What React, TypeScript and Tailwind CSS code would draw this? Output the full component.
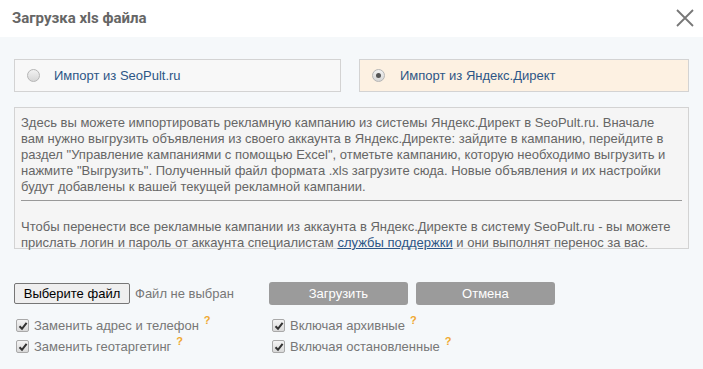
import React from "react";

function Radio({ on }: { on?: boolean }) {
  return (
    <span className="flex h-[13px] w-[13px] items-center justify-center rounded-full border border-[#b5b5b5] bg-gradient-to-b from-[#f2f2f2] to-[#d6d6d6]">
      {on && <span className="h-[5px] w-[5px] rounded-full bg-[#555]" />}
    </span>
  );
}

function Check() {
  return (
    <span className="flex h-[13px] w-[13px] shrink-0 items-center justify-center rounded-[2px] border border-[#a9a9a9] bg-gradient-to-b from-[#f4f4f4] to-[#d9d9d9]">
      <svg width="10" height="10" viewBox="0 0 10 10">
        <path d="M1.5 5.2 L4 7.8 L8.6 1.8" stroke="#333" strokeWidth="2" fill="none" />
      </svg>
    </span>
  );
}

function Option({ label }: { label: string }) {
  return (
    <label className="flex items-center gap-[5px] text-[13px] leading-[21px] text-[#777]">
      <Check />
      <span>{label}</span>
      <span className="-mt-[11px] text-[11px] font-bold text-[#f0a830]">?</span>
    </label>
  );
}

export default function App() {
  return (
    <div className="h-[369px] w-[703px] overflow-hidden bg-[#f5f8fa] font-['Liberation_Sans',Arial,sans-serif]">
      <div className="flex h-[37px] items-center justify-between bg-white pl-[12px] pr-[8px]">
        <h1 className="font-['Roboto',sans-serif] text-[15px] font-bold text-[#666]">Загрузка xls файла</h1>
        <svg width="20" height="20" viewBox="0 0 20 20" className="mt-[-2px]">
          <path d="M2 2 L18 18 M18 2 L2 18" stroke="#777" strokeWidth="1.8" fill="none" />
        </svg>
      </div>

      <div className="px-[14px] pt-[22px]">
        <div className="flex gap-[18px]">
          <div className="flex h-[33px] w-[327px] items-center gap-[14px] border border-[#d3d3d3] bg-[#f8f8f8] pl-[12px]">
            <Radio />
            <span className="text-[13px] text-[#2d5686]">Импорт из SeoPult.ru</span>
          </div>
          <div className="flex h-[33px] w-[330px] items-center gap-[15px] border border-[#d3d3d3] bg-[#fdf1e2] pl-[12px]">
            <Radio on />
            <span className="text-[13px] text-[#2d5686]">Импорт из Яндекс.Директ</span>
          </div>
        </div>

        <div className="mt-[15px] h-[142px] w-[675px] border border-[#d3d3d3] bg-[#f5f5f5] px-[6px] pt-[7px] text-[13px] leading-[16px] text-[#666]">
          <p>
            Здесь вы можете импортировать рекламную кампанию из системы Яндекс.Директ в SeoPult.ru. Вначале
            <br />
            вам нужно выгрузить объявления из своего аккаунта в Яндекс.Директе: зайдите в кампанию, перейдите в
            <br />
            раздел "Управление кампаниями с помощью Excel", отметьте кампанию, которую необходимо выгрузить и
            <br />
            нажмите "Выгрузить". Полученный файл формата .xls загрузите сюда. Новые объявления и их настройки
            <br />
            будут добавлены к вашей текущей рекламной кампании.
          </p>
          <div className="mt-[5px] mb-[18px] h-px bg-[#999]" />
          <p>
            Чтобы перенести все рекламные кампании из аккаунта в Яндекс.Директе в систему SeoPult.ru - вы можете
            <br />
            прислать логин и пароль от аккаунта специалистам{" "}
            <a className="text-[#2d5686] underline">службы поддержки</a> и они выполнят перенос за вас.
          </p>
        </div>

        <div className="mt-[33px] flex items-center">
          <button className="h-[21px] w-[116px] rounded-[2px] border border-[#767676] bg-[#efefef] text-[13px] text-black">
            Выберите файл
          </button>
          <span className="ml-[5px] text-[13px] text-[#777]">Файл не выбран</span>
          <button className="ml-[35px] h-[23px] w-[139px] rounded-[3px] bg-[#9b9b9b] text-[13px] text-white">
            Загрузить
          </button>
          <button className="ml-[8px] h-[23px] w-[139px] rounded-[3px] bg-[#9b9b9b] text-[13px] text-white">
            Отмена
          </button>
        </div>

        <div className="mt-[10px] flex pl-[2px]">
          <div className="flex w-[256px] flex-col">
            <Option label="Заменить адрес и телефон" />
            <Option label="Заменить геотаргетинг" />
          </div>
          <div className="flex flex-col">
            <Option label="Включая архивные" />
            <Option label="Включая остановленные" />
          </div>
        </div>
      </div>
    </div>
  );
}
